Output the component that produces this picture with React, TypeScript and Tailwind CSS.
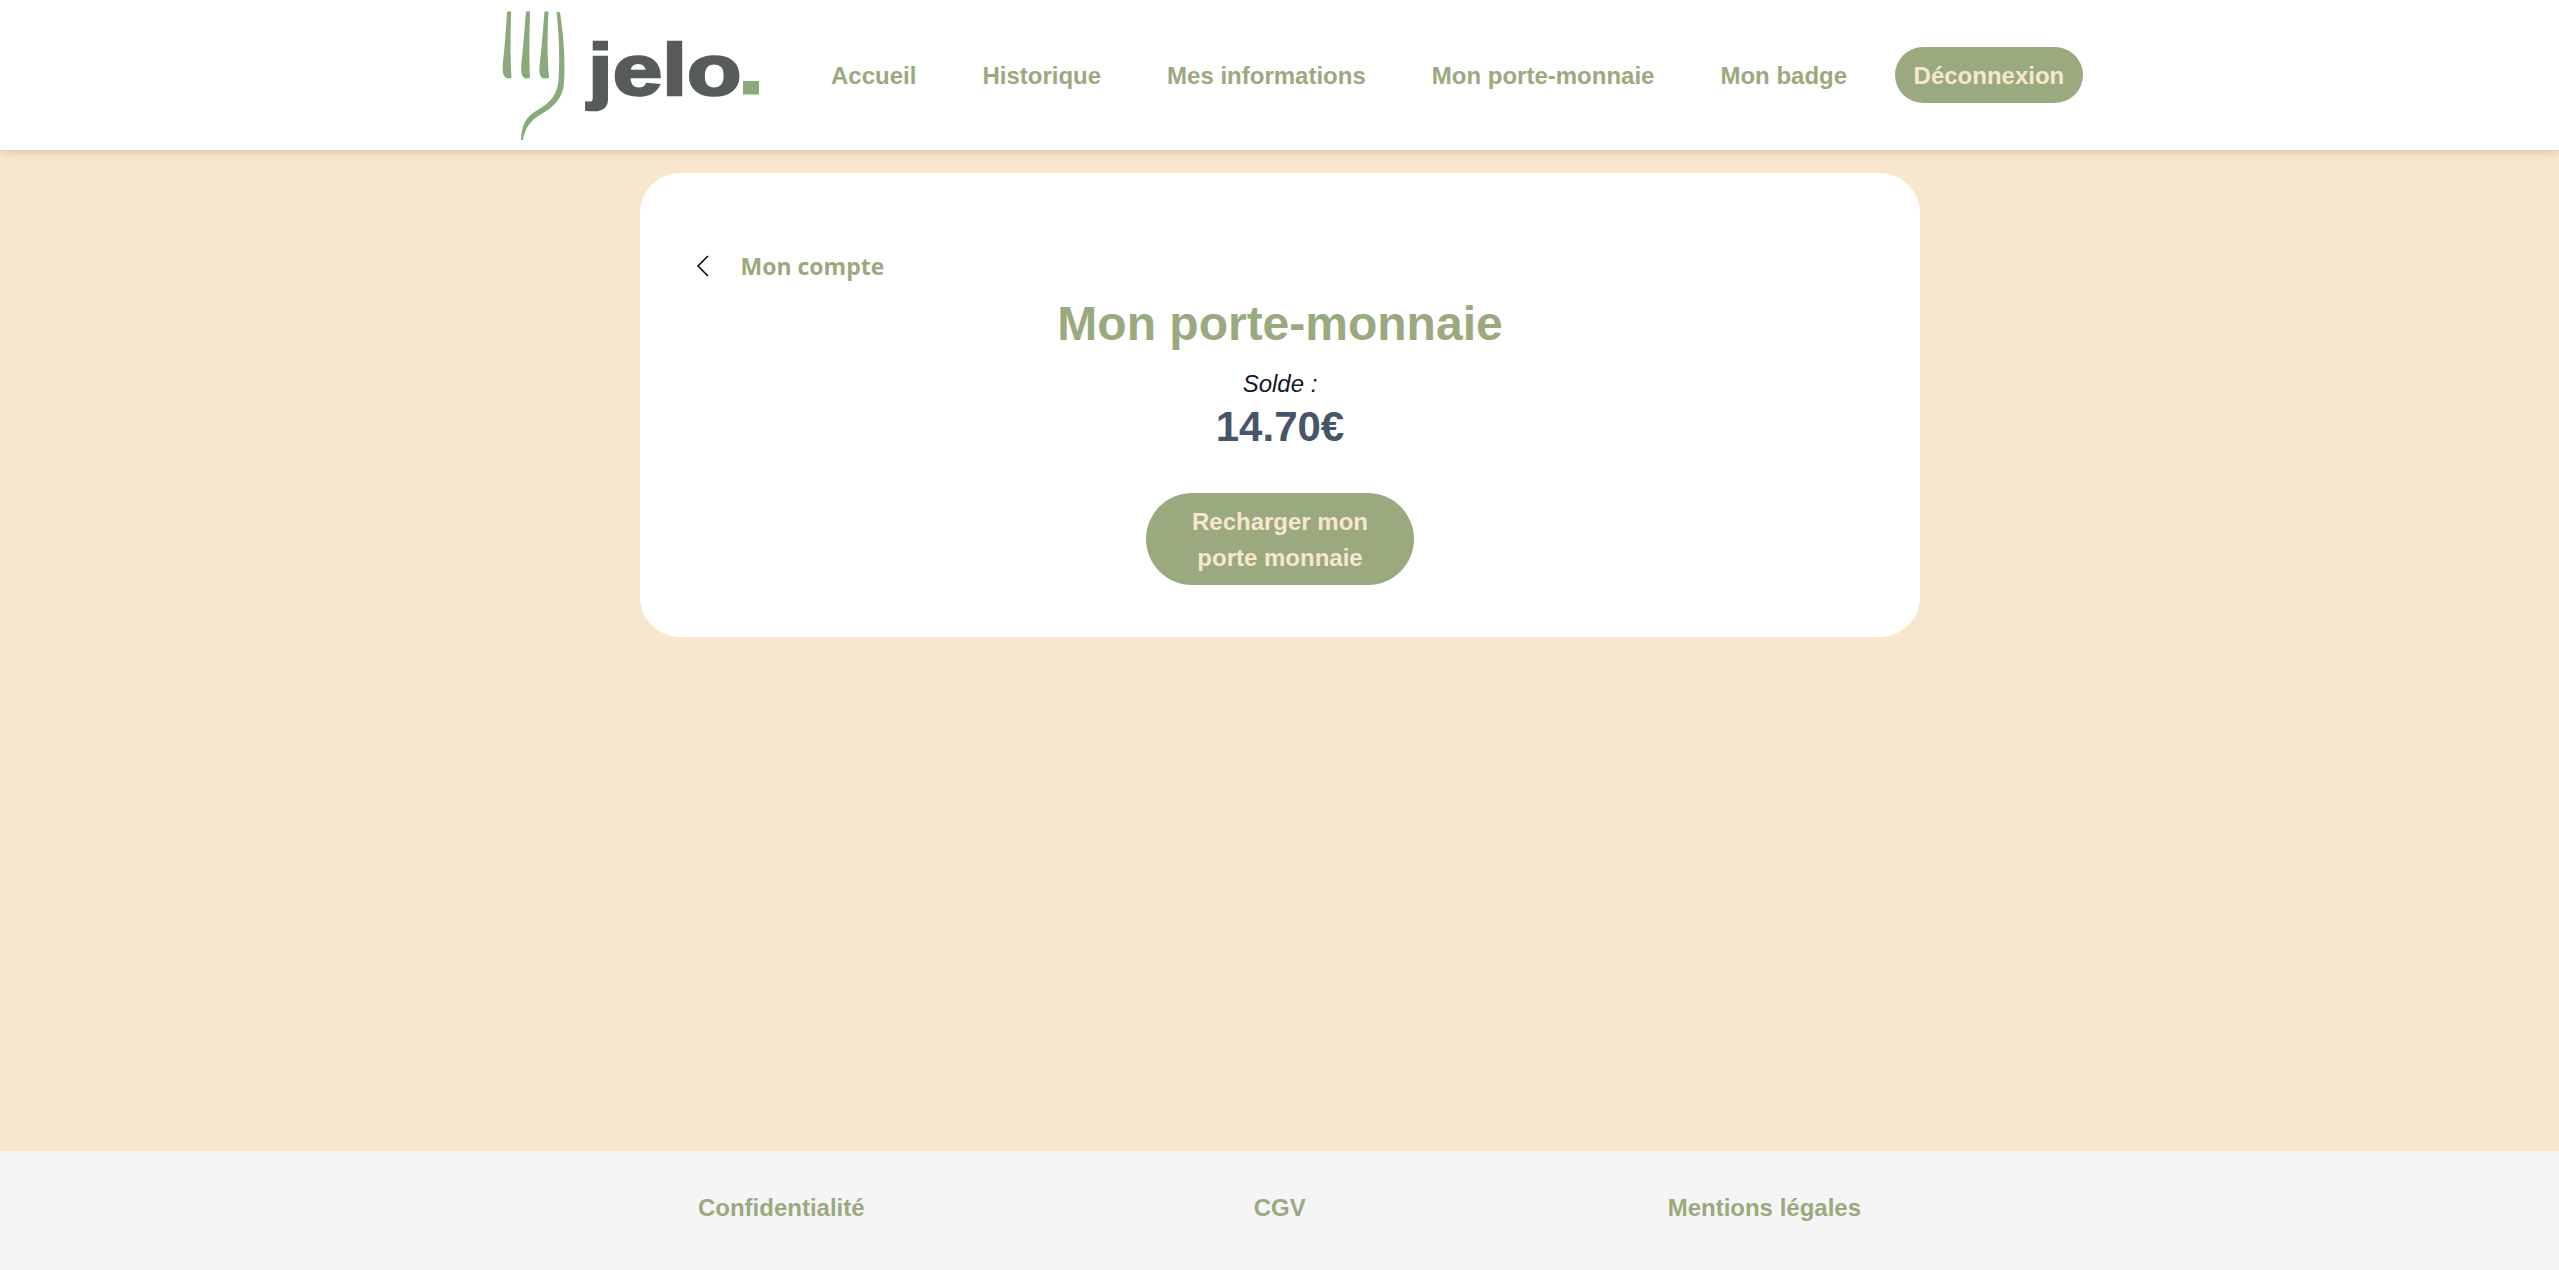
export default function App() {
  const links = ["Accueil", "Historique", "Mes informations", "Mon porte-monnaie", "Mon badge"];
  return (
    <div className="flex h-screen flex-col bg-[#f8e7ce] font-['Liberation_Sans',Arial,sans-serif] font-bold text-[24px] text-[#9ba97e]">
      <header className="relative z-10 flex h-[150px] items-center bg-white pl-[480px] shadow-[0_2px_8px_rgba(150,120,80,0.3)]">
        <svg className="h-[150px] w-[318px] shrink-0" viewBox="0 0 318 150" fill="none">
          <g fill="#8aaa7c">
            <path d="M27 11.500 L31.200 11.500 C30.500 30 30 55 31.500 78 L28 78.500 C23 78 22 72 23 62 C25 45 26 28 27 11.500 Z" />
            <path d="M46 11.500 L50 11.500 C49.500 32 49 55 50 78 L46 78.500 C41.500 78 40.500 72 41.500 62 C43.500 45 44.500 28 46 11.500 Z" />
            <path d="M64.500 11.500 L68.500 11.500 C67.500 32 67 55 69 78 L64 78.500 C59.500 78 58.500 72 60 62 C62 45 63 28 64.500 11.500 Z" />
            <path d="M76.500 11.500 L80 12.500 C83.500 35 85.500 60 84 83 C82.500 100 72 108 60 115 C50 121 45 128 43 140 L41 140 C41.500 125 46 117 56 111 C68 104 77 97 78.500 80 C80 58 79 35 76.500 11.500 Z" />
          </g>
          <text x="108" y="95" transform="translate(108 0) scale(1.22 1) translate(-108 0)" fontFamily="'Liberation Sans', Arial, sans-serif" fontWeight="700" fontSize="73" fill="#585b5b" stroke="#585b5b" strokeWidth="2.500">jelo</text>
          <rect x="263" y="81" width="16" height="13.500" fill="#8aaa7c" />
        </svg>
        <nav className="flex items-center">
          {links.map((l) => (
            <a key={l} className="px-[33px] pt-[1px] leading-[36px]">{l}</a>
          ))}
          <a className="ml-[15px] flex h-[56px] items-center rounded-full bg-[#9ba97e] px-[18.5px] pt-[1px] text-[#f8e7ce]">Déconnexion</a>
        </nav>
      </header>
      <main className="flex-1">
        <section className="mx-auto mt-[23px] flex w-[1280px] flex-col rounded-[40px] bg-white pb-[52px] pt-[75px]">
          <a className="flex h-[36px] items-center pl-[56px]">
            <svg className="h-[22px] w-[14px]" viewBox="0 0 14 22" fill="none" stroke="#000" strokeWidth="1.500">
              <path d="M12 1 L2 11 L12 21" />
            </svg>
            <span className="ml-[31px] font-['Open_Sans',sans-serif] text-[23px] font-bold">Mon compte</span>
          </a>
          <h1 className="mt-[10px] pl-[1px] text-center text-[48px] leading-[60px]">Mon porte-monnaie</h1>
          <p className="mt-[12px] pl-[1px] text-center font-normal italic leading-[36px] text-[#111827]">Solde :</p>
          <p className="pl-[1px] text-center text-[42px] leading-[50px] text-[#475569]">14.70€</p>
          <a className="mx-auto mt-[41px] flex h-[92px] w-[268px] items-center justify-center rounded-[46px] bg-[#9ba97e] pl-[41px] pr-[40px] pt-[1px] text-center leading-[36px] text-[#f8e7ce]">Recharger mon porte monnaie</a>
        </section>
      </main>
      <footer className="flex h-[119px] justify-center bg-[#f5f5f5] pt-[39px]">
        <a className="h-fit leading-[36px]">Confidentialité</a>
        <a className="ml-[389px] h-fit leading-[36px]">CGV</a>
        <a className="ml-[362px] h-fit leading-[36px]">Mentions légales</a>
      </footer>
    </div>
  );
}
